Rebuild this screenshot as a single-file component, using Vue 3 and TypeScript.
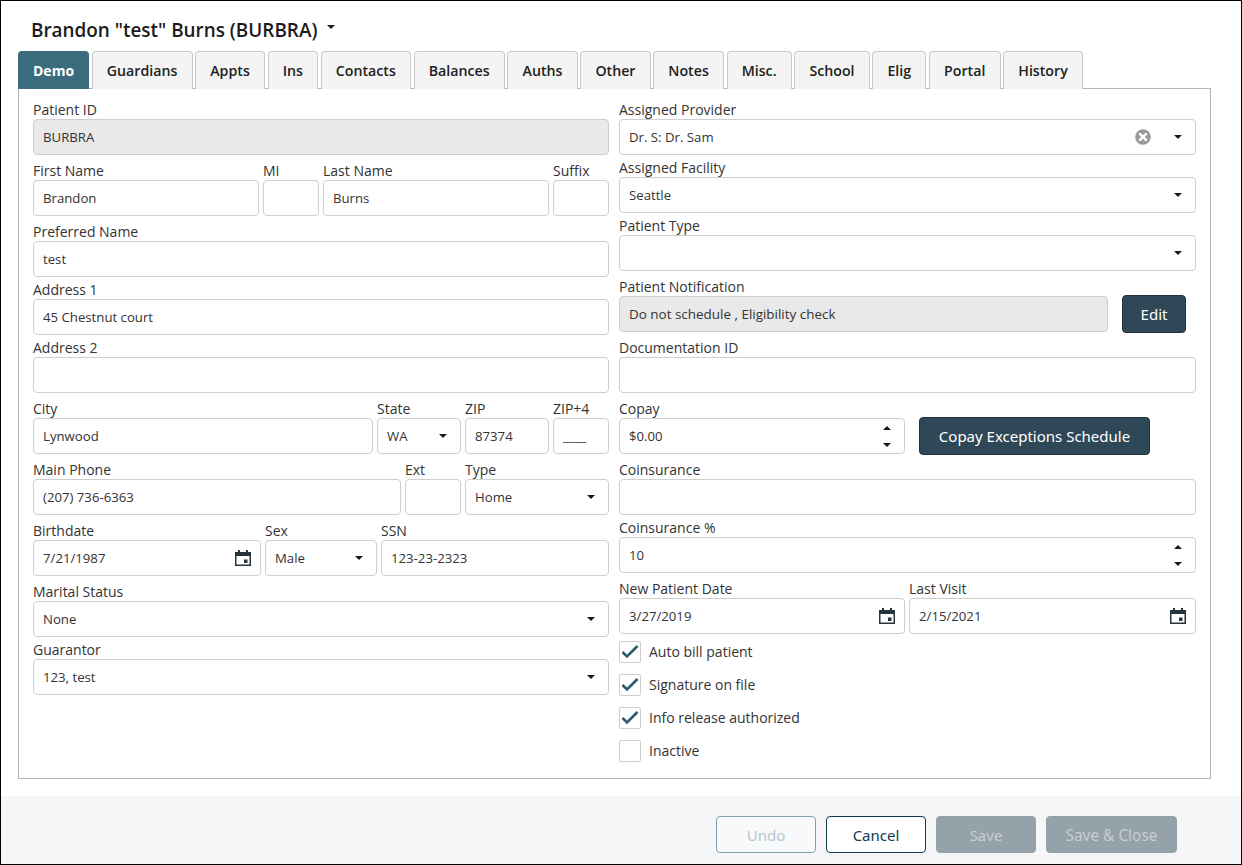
<script setup lang="ts">
const tabs: string[] = ['Demo','Guardians','Appts','Ins','Contacts','Balances','Auths','Other','Notes','Misc.','School','Elig','Portal','History']
const checks: { label: string; on: boolean }[] = [
  { label: 'Auto bill patient', on: true },
  { label: 'Signature on file', on: true },
  { label: 'Info release authorized', on: true },
  { label: 'Inactive', on: false }
]
</script>

<template>
  <div class="root">
    <header class="head">
      <h1 class="title">Brandon "test" Burns (BURBRA)</h1>
      <i class="caret title-caret"></i>
    </header>
    <nav class="tabs">
      <div v-for="(t, i) in tabs" :key="t" class="tab" :class="{ active: i === 0 }">{{ t }}</div>
    </nav>
    <main class="panel">
      <section class="col">
        <div class="field tall"><label>Patient ID</label><div class="ctl dis">BURBRA</div></div>
        <div class="row tall r-name">
          <div class="field"><label>First Name</label><div class="ctl">Brandon</div></div>
          <div class="field"><label>MI</label><div class="ctl"></div></div>
          <div class="field"><label>Last Name</label><div class="ctl">Burns</div></div>
          <div class="field"><label>Suffix</label><div class="ctl"></div></div>
        </div>
        <div class="field"><label>Preferred Name</label><div class="ctl">test</div></div>
        <div class="field"><label>Address 1</label><div class="ctl">45 Chestnut court</div></div>
        <div class="field tall"><label>Address 2</label><div class="ctl"></div></div>
        <div class="row tall r-city">
          <div class="field"><label>City</label><div class="ctl">Lynwood</div></div>
          <div class="field"><label>State</label><div class="ctl sel">WA<i class="caret"></i></div></div>
          <div class="field"><label>ZIP</label><div class="ctl">87374</div></div>
          <div class="field"><label>ZIP+4</label><div class="ctl">____</div></div>
        </div>
        <div class="row tall r-phone">
          <div class="field"><label>Main Phone</label><div class="ctl">(207) 736-6363</div></div>
          <div class="field"><label>Ext</label><div class="ctl"></div></div>
          <div class="field"><label>Type</label><div class="ctl sel">Home<i class="caret"></i></div></div>
        </div>
        <div class="row tall r-birth">
          <div class="field"><label>Birthdate</label><div class="ctl sel cal">7/21/1987
            <svg class="cal-ico" viewBox="0 0 16 16"><path d="M3 0h2v2h6V0h2v2h3v14H0V2h3zM1.500 6v8.500h13V6zM9 9.500h3.500V13H9z" fill-rule="evenodd"/></svg></div></div>
          <div class="field"><label>Sex</label><div class="ctl sel">Male<i class="caret"></i></div></div>
          <div class="field"><label>SSN</label><div class="ctl">123-23-2323</div></div>
        </div>
        <div class="field"><label>Marital Status</label><div class="ctl sel">None<i class="caret"></i></div></div>
        <div class="field"><label>Guarantor</label><div class="ctl sel">123, test<i class="caret"></i></div></div>
      </section>

      <section class="col">
        <div class="field"><label>Assigned Provider</label>
          <div class="ctl sel">Dr. S: Dr. Sam
            <svg class="clear" viewBox="0 0 16 16"><circle cx="8" cy="8" r="7.800" fill="#9a9a9a"/><path d="M4.300 4.300l7.400 7.400M11.700 4.300l-7.400 7.400" stroke="#fff" stroke-width="2.400"/></svg>
            <i class="caret"></i></div></div>
        <div class="field"><label>Assigned Facility</label><div class="ctl sel">Seattle<i class="caret"></i></div></div>
        <div class="field tall"><label>Patient Type</label><div class="ctl sel"><i class="caret"></i></div></div>
        <div class="field tall"><label>Patient Notification</label>
          <div class="inline r-notif"><div class="ctl dis note">Do not schedule , Eligibility check</div><button class="btn edit">Edit</button></div></div>
        <div class="field tall"><label>Documentation ID</label><div class="ctl"></div></div>
        <div class="field tall"><label>Copay</label>
          <div class="inline r-copay">
            <div class="ctl sel">$0.00<span class="spin"><i class="caret up"></i><i class="caret"></i></span></div>
            <button class="btn wide">Copay Exceptions Schedule</button></div></div>
        <div class="field"><label>Coinsurance</label><div class="ctl"></div></div>
        <div class="field tall"><label>Coinsurance %</label>
          <div class="ctl sel">10<span class="spin"><i class="caret up"></i><i class="caret"></i></span></div></div>
        <div class="row r-dates">
          <div class="field"><label>New Patient Date</label><div class="ctl sel cal">3/27/2019
            <svg class="cal-ico" viewBox="0 0 16 16"><path d="M3 0h2v2h6V0h2v2h3v14H0V2h3zM1.500 6v8.500h13V6zM9 9.500h3.500V13H9z" fill-rule="evenodd"/></svg></div></div>
          <div class="field"><label>Last Visit</label><div class="ctl sel cal">2/15/2021
            <svg class="cal-ico" viewBox="0 0 16 16"><path d="M3 0h2v2h6V0h2v2h3v14H0V2h3zM1.500 6v8.500h13V6zM9 9.500h3.500V13H9z" fill-rule="evenodd"/></svg></div></div>
        </div>
        <div class="checks">
          <div v-for="c in checks" :key="c.label" class="check">
            <span class="box">
              <svg v-if="c.on" viewBox="0 0 20 20"><path d="M2.500 10l4.500 4.500L17.500 4" fill="none" stroke="#2b5c70" stroke-width="2.600"/></svg>
            </span>
            <span class="check-text">{{ c.label }}</span>
          </div>
        </div>
      </section>
    </main>
    <footer class="foot">
      <button class="fbtn undo">Undo</button>
      <button class="fbtn cancel">Cancel</button>
      <button class="fbtn off">Save</button>
      <button class="fbtn off sc">Save &amp; Close</button>
    </footer>
  </div>
</template>

<style>
html, body { margin: 0; background: #fff; }
</style>

<style scoped>
.root {
  box-sizing: border-box; width: 1242px; height: 865px; border: 1px solid #000;
  display: flex; flex-direction: column; background: #fff; overflow: hidden;
  font-family: "Open Sans", "Noto Sans", sans-serif; color: #333;
}
.head { height: 50px; box-sizing: border-box; padding: 17px 0 0 30px; display: flex; align-items: flex-start; }
.title { margin: 0; font-size: 18.900px; line-height: 24px; font-weight: 600; color: #1c1c1c; }
.title-caret { margin: 7px 0 0 10px; }
.caret {
  display: block; width: 0; height: 0;
  border-left: 4px solid transparent; border-right: 4px solid transparent; border-top: 4px solid #1a1a1a;
}
.caret.up { border-top: 0; border-bottom: 4px solid #1a1a1a; }
.tabs { display: flex; gap: 2.500px; margin-left: 17px; height: 37px; position: relative; z-index: 1; }
.tab {
  box-sizing: border-box; padding: 0 14.200px; height: 38px; line-height: 38px;
  background: #f4f4f4; border: 1px solid #c8c8c8; border-bottom: 0; border-radius: 4px 4px 0 0;
  font-size: 14.200px; font-weight: 600; color: #222;
}
.tab.active { background: #3a6c7e; border-color: #3a6c7e; color: #fff; font-weight: 700; font-size: 14px; padding: 0 14px; }
.panel {
  margin: 0 30px 0 17px; border: 1px solid #b4b4b4; box-sizing: border-box; height: 691px;
  padding: 12px 14px 0; display: grid; grid-template-columns: 576px 577px; column-gap: 10px;
}
.col { display: flex; flex-direction: column; align-items: stretch; }
.field { display: flex; flex-direction: column; margin-bottom: 4px; min-width: 0; }
.row .field { margin-bottom: 0; }
.field.tall, .row.tall { margin-bottom: 7px; }
.row { display: grid; column-gap: 4px; margin-bottom: 4px; }
.r-name { grid-template-columns: 226px 56px 226px 56px; }
.r-city { grid-template-columns: 340px 84px 84px 56px; }
.r-phone { grid-template-columns: 368px 56px 144px; }
.r-birth { grid-template-columns: 228px 112px 228px; }
.r-dates { grid-template-columns: 286px 287px; margin-bottom: 0; }
label { display: block; height: 18px; font-size: 14px; line-height: 18px; color: #333; }
.ctl {
  box-sizing: border-box; height: 36px; border: 1px solid #cfcfcf; border-radius: 4px; background: #fff;
  padding: 0 9px; font-size: 13.200px; line-height: 35px; color: #333; white-space: nowrap; position: relative;
}
.ctl.dis { background: #e9e9e9; }
.ctl.note { font-size: 13.450px; }
.sel > .caret { position: absolute; right: 13.500px; top: 15px; }
.clear { position: absolute; right: 44px; top: 9px; width: 16px; height: 16px; }
.cal-ico { position: absolute; right: 9px; top: 9px; width: 16px; height: 16px; fill: #26343b; }
.spin { position: absolute; right: 13px; top: 7px; height: 21px; display: flex; flex-direction: column; justify-content: space-between; }
.inline { display: flex; align-items: center; height: 36px; }
.r-notif .ctl { width: 489px; flex: none; }
.r-copay .ctl { width: 286px; flex: none; }
.btn {
  box-sizing: border-box; height: 38px; border: 1px solid #22343f; border-radius: 4px; background: #2f4857;
  color: #fff; font-family: "Noto Sans", "Open Sans", sans-serif; font-size: 15px; padding: 0;
}
.edit { width: 64px; margin-left: 14px; }
.wide { width: 231px; margin-left: 14px; }
.checks { display: flex; flex-direction: column; gap: 11px; margin-top: 7px; }
.check { display: flex; align-items: center; gap: 8px; font-size: 14px; height: 22px; color: #333; }
.check-text { padding-bottom: 2px; }
.box { box-sizing: border-box; width: 22px; height: 22px; border: 1px solid #cfcfcf; border-radius: 2px; background: #fff; display: block; }
.box svg { display: block; width: 20px; height: 20px; }
.foot {
  margin-top: 17px; flex: 1; background: #f4f6f8; display: flex; justify-content: flex-end;
  gap: 10px; padding: 20px 64px 0 0; align-items: flex-start;
}
.fbtn {
  box-sizing: border-box; width: 100px; height: 37px; border-radius: 4px; padding: 0;
  font-family: "Noto Sans", "Open Sans", sans-serif; font-size: 15px;
}
.undo { background: #f7f9fa; border: 1px solid #7fa2ae; color: #b7c7ce; }
.cancel { background: #fff; border: 1px solid #0d3b4f; color: #0d3b4f; }
.off { background: #95a2a9; border: 1px solid #95a2a9; color: #c6ced3; }
.sc { width: 131px; font-size: 15.400px; padding-top: 1px; }
</style>
